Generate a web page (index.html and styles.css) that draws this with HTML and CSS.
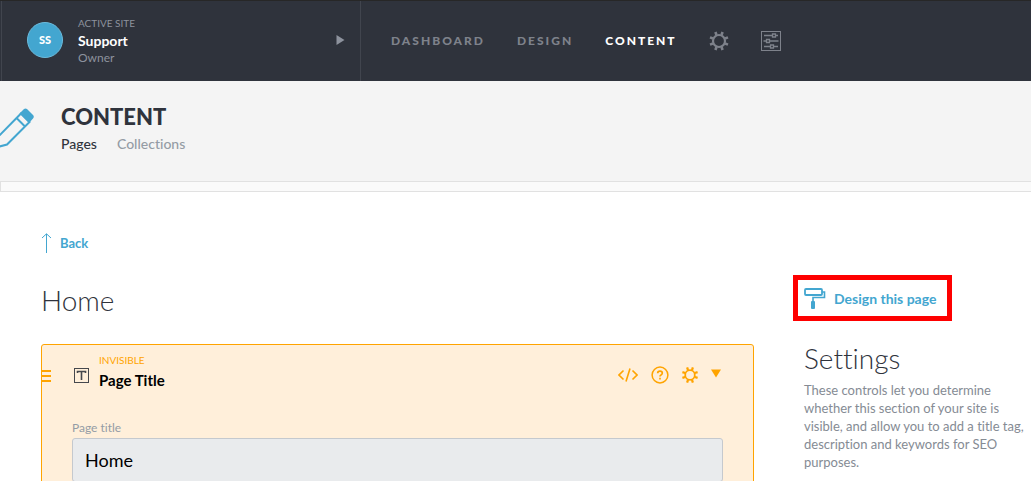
FILE: index.html
```html
<!DOCTYPE html>
<html lang="en">

<head>
    <meta charset="UTF-8" />
    <meta name="viewport" content="width=device-width, initial-scale=1.0" />
    <title>Content - Support</title>
    <link rel="stylesheet" href="styles.css">
</head>

<body>

    <header class="topbar">
        <button class="site-switcher" type="button">
            <span class="avatar">SS</span>
            <span class="site-info">
                <span class="site-label">ACTIVE SITE</span>
                <span class="site-name">Support</span>
                <span class="site-role">Owner</span>
            </span>
            <svg class="site-arrow" width="9" height="10" viewBox="0 0 9 10" aria-hidden="true">
                <path d="M0.5 0 L8.5 5 L0.5 10 Z" fill="currentColor" />
            </svg>
        </button>

        <nav class="main-nav">
            <a href="#">DASHBOARD</a>
            <a href="#">DESIGN</a>
            <a href="#" class="active">CONTENT</a>
            <a href="#" aria-label="Settings">
                <svg width="20" height="20" viewBox="0 0 20 20" fill="none" stroke="currentColor">
                    <circle cx="10" cy="10" r="6" stroke-width="2.2" />
                    <path d="M12.5 4 L13.6 1 M16 7.5 L19 6.4 M16 12.5 L19 13.6 M12.5 16 L13.6 19 M7.5 16 L6.4 19 M4 12.5 L1 13.6 M4 7.5 L1 6.4 M7.5 4 L6.4 1" stroke-width="2.6" />
                </svg>
            </a>
            <a href="#" aria-label="Preferences">
                <svg width="20" height="20" viewBox="0 0 20 20" fill="none" stroke="currentColor">
                    <rect x="0.5" y="0.5" width="19" height="19" />
                    <path d="M3 4.5 H11 M15 4.5 H17 M2.5 10 H5 M9 10 H17.5 M3 15.5 H9 M13 15.5 H17" stroke-width="1.3" />
                    <path d="M11.5 3 H14.5 V6 H11.5 Z M5.5 8.5 H8.5 V11.5 H5.5 Z M9.5 14 H12.5 V17 H9.5 Z" stroke-width="1.3" />
                </svg>
            </a>
        </nav>
    </header>

    <section class="page-header">
        <svg class="pencil" width="35" height="42" viewBox="0 0 35 42" aria-hidden="true">
            <path d="M-4 31 L21 5.5 L29.5 14 L7 36.5 L-4 39.5 M16.5 10 L25 18.5" fill="none" stroke="currentColor" stroke-width="2" />
            <path d="M19.5 5.5 L24 1 Q25.5 -0.2 27 1 L33 7 Q34.5 8.5 33 10.5 L29 15 Z" fill="currentColor" />
        </svg>
        <div class="page-heading">
            <h1>CONTENT</h1>
            <nav class="sub-nav">
                <a href="#" class="active">Pages</a>
                <a href="#">Collections</a>
            </nav>
        </div>
    </section>
    <div class="divider"></div>

    <div class="layout">
        <main>
            <a href="#" class="back">
                <svg width="11" height="20" viewBox="0 0 11 20" fill="none" stroke="currentColor" aria-hidden="true">
                    <path d="M5.5 20 V1 M1 5 L5.5 0.8 L10 5" />
                </svg>
                Back
            </a>
            <h2>Home</h2>

            <section class="card">
                <div class="card-header">
                    <svg class="drag" width="9" height="13" viewBox="0 0 9 13" aria-hidden="true">
                        <path d="M0 2 H9 M0 7 H9 M0 12 H9" stroke="currentColor" stroke-width="2" />
                    </svg>
                    <svg class="text-icon" width="15" height="15" viewBox="0 0 15 15" fill="none" stroke="currentColor" aria-hidden="true">
                        <rect x="0.5" y="0.5" width="14" height="14" />
                        <path d="M3.5 5 V3.5 H11.5 V5 M7.5 3.5 V12" stroke-width="1.6" />
                    </svg>
                    <div class="card-title">
                        <span class="status">INVISIBLE</span>
                        <h3>Page Title</h3>
                    </div>
                    <div class="card-actions">
                        <button type="button" aria-label="Code">
                            <svg width="20" height="14" viewBox="0 0 20 14" fill="none" stroke="currentColor" stroke-width="1.6">
                                <path d="M5.5 2.5 L1 7 L5.5 11.5 M14.5 2.5 L19 7 L14.5 11.5 M12 0.5 L8 13.5" />
                            </svg>
                        </button>
                        <button type="button" aria-label="Help">
                            <svg width="18" height="18" viewBox="0 0 18 18" fill="none" stroke="currentColor">
                                <circle cx="9" cy="9" r="7.9" stroke-width="1.5" />
                                <path d="M6.7 7.2 Q6.7 5.2 9 5.2 Q11.3 5.2 11.3 7 Q11.3 8.2 10 8.9 Q9 9.4 9 10.5 M9 11.8 V13.5" stroke-width="1.7" />
                            </svg>
                        </button>
                        <button type="button" aria-label="Options">
                            <svg width="16" height="16" viewBox="0 0 20 20" fill="none" stroke="currentColor">
                                <circle cx="10" cy="10" r="6" stroke-width="2.2" />
                                <path d="M12.5 4 L13.6 0.5 M16 7.5 L19.5 6.4 M16 12.5 L19.5 13.6 M12.5 16 L13.6 19.5 M7.5 16 L6.4 19.5 M4 12.5 L0.5 13.6 M4 7.5 L0.5 6.4 M7.5 4 L6.4 0.5" stroke-width="2.8" />
                            </svg>
                        </button>
                        <button type="button" aria-label="Collapse">
                            <svg width="10" height="12" viewBox="0 0 10 12">
                                <path d="M0 0.5 H10 L5 8.5 Z" fill="currentColor" />
                            </svg>
                        </button>
                    </div>
                </div>
                <div class="form-group">
                    <label for="page-title">Page title</label>
                    <input type="text" id="page-title" value="Home">
                </div>
            </section>
        </main>

        <aside>
            <a href="#" class="design-link">
                <svg width="22" height="22" viewBox="0 0 22 22" fill="none" stroke="currentColor" aria-hidden="true">
                    <rect x="1" y="2" width="17" height="6" rx="1" stroke-width="1.8" />
                    <path d="M18 5 H20.5 V10.5 H9 V15" stroke-width="1.6" />
                    <rect x="7" y="14" width="4" height="8" rx="1" fill="currentColor" stroke="none" />
                </svg>
                Design this page
            </a>
            <h2>Settings</h2>
            <p>These controls let you determine whether this section of your site is visible, and allow you to add a title tag, description and keywords for SEO purposes.</p>
        </aside>
    </div>

</body>

</html>
```

FILE: styles.css
```css
* {
    box-sizing: border-box;
}

body {
    margin: 0;
    font-family: Lato, "Open Sans", sans-serif;
    font-size: 14px;
    font-variant-ligatures: none;
    color: #2f333c;
    background: #fff;
    overflow: hidden;
}

a {
    text-decoration: none;
}

button {
    padding: 0;
    border: none;
    background: none;
    font-family: inherit;
    cursor: pointer;
}

svg {
    display: block;
    flex-shrink: 0;
}

h1,
h2,
h3,
p {
    margin: 0;
}

/* top bar */
.topbar {
    display: flex;
    height: 81px;
    padding-left: 1px;
    background: #2f333c;
    border-top: 1px solid #272727;
}

.site-switcher {
    display: flex;
    align-items: center;
    width: 360px;
    padding: 0 15px 2px 25px;
    border: solid #41454e;
    border-width: 0 1px;
    text-align: left;
}

.avatar {
    width: 36px;
    height: 36px;
    margin-right: 15px;
    border: 1px solid #6cbbdc;
    border-radius: 50%;
    background: #43a6d0;
    color: #fff;
    font-size: 11px;
    font-weight: 900;
    line-height: 34px;
    text-align: center;
}

.site-info {
    display: flex;
    flex-direction: column;
    flex: 1;
    line-height: 17px;
    color: #8d929d;
}

.site-label {
    font-size: 10px;
}

.site-name {
    font-size: 14px;
    font-weight: bold;
    color: #fff;
}

.site-role {
    font-size: 12px;
}

.site-arrow {
    color: #8d929d;
}

.main-nav {
    display: flex;
    align-items: center;
    gap: 32px;
    padding: 0 0 1px 30px;
}

.main-nav a {
    color: #7e828b;
    font-size: 12px;
    font-weight: 900;
    letter-spacing: 2px;
}

.main-nav a.active {
    color: #fff;
}

/* page header */
.page-header {
    display: flex;
    gap: 26px;
    height: 100px;
    padding-top: 24px;
    background: #f4f4f4;
}

.pencil {
    margin-top: 3px;
    color: #43a6d0;
}

h1 {
    font-size: 22px;
    font-weight: 900;
    line-height: 24px;
}

.sub-nav {
    display: flex;
    gap: 20px;
    margin-top: 5px;
    line-height: 20px;
}

.sub-nav a {
    color: #949ca5;
    font-weight: 500;
}

.sub-nav a.active {
    color: #2f333c;
}

.divider {
    height: 11px;
    border: 1px solid #e1e1e1;
    border-right: none;
    background: #fafafa;
}

/* content */
.layout {
    display: grid;
    grid-template-columns: minmax(0, 1fr) 238px;
    gap: 39px;
    padding: 40px 0 0 41px;
}

h2 {
    font-size: 28px;
    font-weight: 300;
    line-height: 36px;
}

.back {
    display: flex;
    align-items: center;
    gap: 8px;
    width: fit-content;
    height: 22px;
    color: #43a6d0;
    font-weight: bold;
    font-size: 13px;
}

main h2 {
    margin: 28px 0 26px;
}

.card {
    padding: 0 30px 30px 0;
    border: 1px solid #ffa400;
    border-radius: 3px;
    background: #ffefda;
}

.card-header {
    display: flex;
    align-items: center;
    height: 60px;
    padding-right: 2px;
    color: #ffa400;
}

.text-icon {
    margin: 0 10px 0 23px;
    color: #46484d;
}

.card-title {
    flex: 1;
    padding-bottom: 4px;
}

.status {
    display: block;
    font-size: 10px;
    line-height: 14px;
}

h3 {
    font-size: 15px;
    font-weight: bold;
    line-height: 26px;
    color: #000;
}

.card-actions {
    display: flex;
    align-items: center;
    gap: 13px;
}

.card-actions button {
    color: inherit;
}

.form-group {
    padding: 12px 0 0 30px;
}

.form-group label {
    display: block;
    font-size: 12px;
    line-height: 21px;
    color: #949ca5;
}

.form-group input {
    width: 100%;
    height: 44px;
    padding: 0 12px;
    border: 1px solid #c5c9ce;
    border-radius: 3px;
    background: #e9ebed;
    color: #000;
    font-family: inherit;
    font-size: 18px;
}

/* sidebar */
aside {
    padding-top: 43px;
}

.design-link {
    display: flex;
    align-items: center;
    gap: 8px;
    width: fit-content;
    height: 46px;
    padding: 0 11px 0 6px;
    border: 5px solid #fe0000;
    color: #43a6d0;
    font-weight: bold;
}

aside h2 {
    margin: 19px 0 5px;
    padding-left: 11px;
}

aside p {
    padding-left: 11px;
    font-size: 13px;
    line-height: 18px;
    color: #858b94;
}
```
